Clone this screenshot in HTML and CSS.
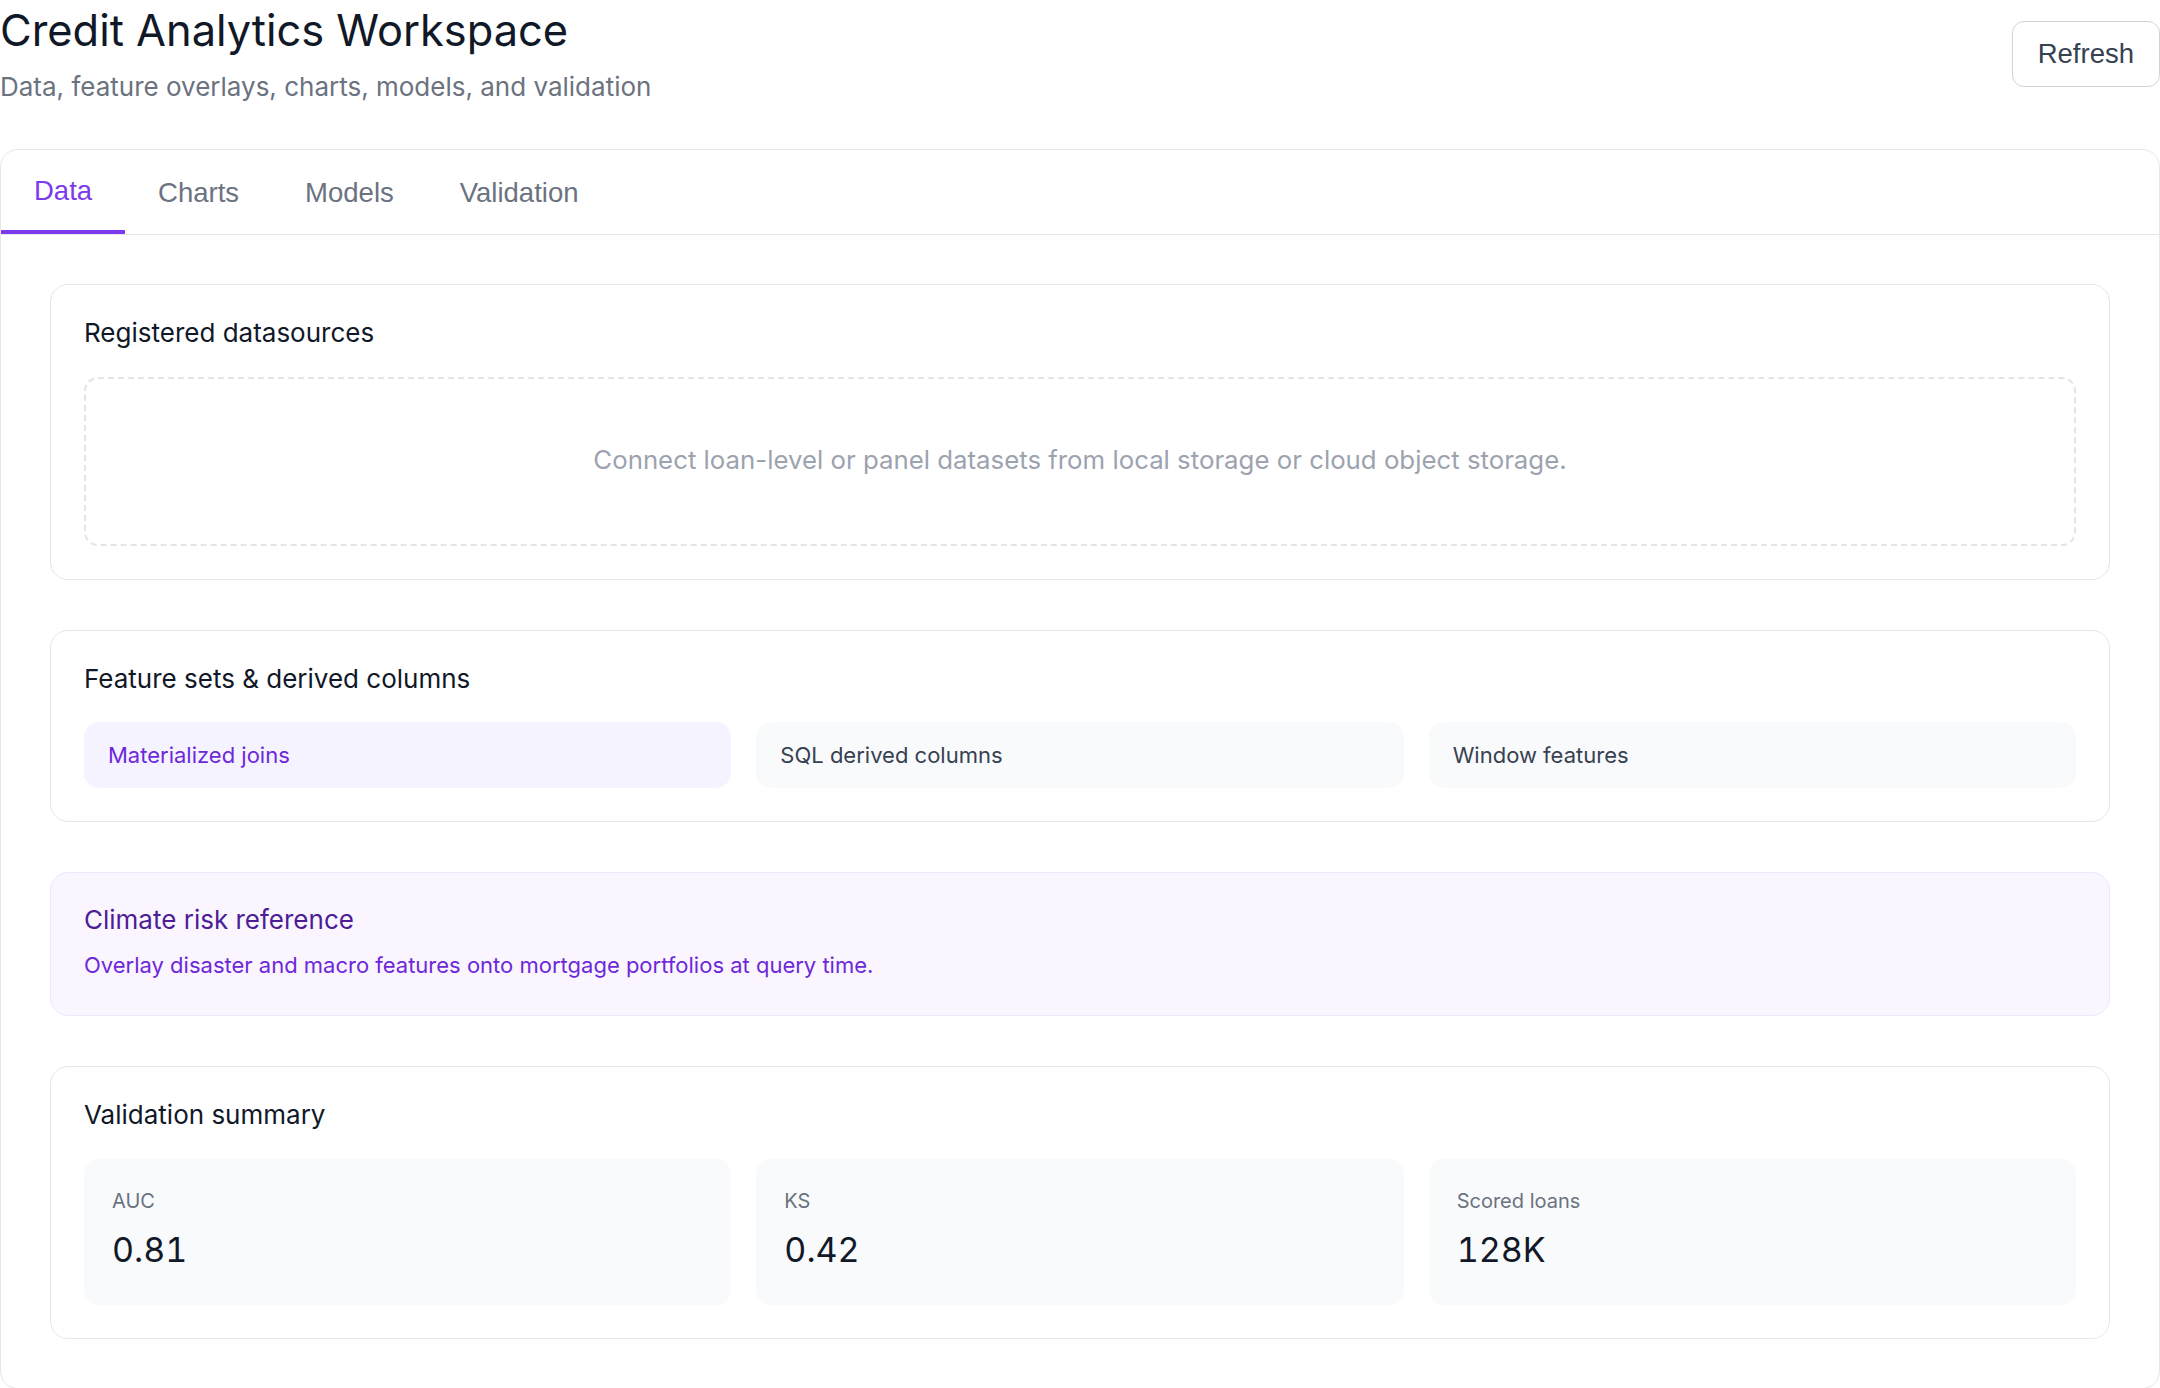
FILE: index.html
```html
<!DOCTYPE html>
<html lang="en">
<head>
  <meta charset="UTF-8">
  <title>Credit Analytics Workspace</title>
  <link rel="stylesheet" href="styles.css">
</head>
<body>
  <header class="page-head">
    <div>
      <h1>Credit Analytics Workspace</h1>
      <p class="subtitle">Data, feature overlays, charts, models, and validation</p>
    </div>
    <button class="refresh">Refresh</button>
  </header>

  <main class="workspace">
    <nav class="tabs">
      <button class="tab active">Data</button>
      <button class="tab">Charts</button>
      <button class="tab">Models</button>
      <button class="tab">Validation</button>
    </nav>

    <div class="panel">
      <section class="card">
        <h3>Registered datasources</h3>
        <div class="empty">Connect loan-level or panel datasets from local storage or cloud object storage.</div>
      </section>

      <section class="card">
        <h3>Feature sets &amp; derived columns</h3>
        <div class="chips">
          <div class="chip active">Materialized joins</div>
          <div class="chip">SQL derived columns</div>
          <div class="chip">Window features</div>
        </div>
      </section>

      <section class="card note">
        <h3>Climate risk reference</h3>
        <p>Overlay disaster and macro features onto mortgage portfolios at query time.</p>
      </section>

      <section class="card">
        <h3>Validation summary</h3>
        <div class="stats">
          <div class="stat">
            <div class="label">AUC</div>
            <div class="value">0.81</div>
          </div>
          <div class="stat">
            <div class="label">KS</div>
            <div class="value">0.42</div>
          </div>
          <div class="stat">
            <div class="label">Scored loans</div>
            <div class="value">128K</div>
          </div>
        </div>
      </section>
    </div>
  </main>
</body>
</html>
```

FILE: styles.css
```css
body {
  margin: 0;
  font-family: Inter, "Noto Sans", sans-serif;
  color: #111827;
  background: #fff;
}
.page-head {
  display: flex;
  justify-content: space-between;
  align-items: center;
  padding-top: 3px;
  margin-bottom: 44px;
}
h1 {
  margin: 0;
  font-size: 43.4px;
  font-weight: 400;
  line-height: 55px;
}
.subtitle {
  margin: 10px 0 0;
  font-size: 26px;
  line-height: 37px;
  color: #6b7280;
}
.refresh {
  font-family: "Liberation Sans", Arial, sans-serif;
  font-size: 27.5px;
  color: #374151;
  background: #fff;
  border: 1.5px solid #d1d5db;
  border-radius: 12px;
  padding: 0 25px;
  height: 66px;
}
.workspace {
  border: 1.5px solid #e5e7eb;
  border-radius: 18px;
}
.tabs {
  display: flex;
  border-bottom: 1.5px solid #e5e7eb;
}
.tab {
  font-family: "Liberation Sans", Arial, sans-serif;
  font-size: 27.5px;
  color: #6b7280;
  background: none;
  border: 0;
  padding: 25px 33px 23px;
}
.tab.active {
  color: #7c3aed;
  border-bottom: 4px solid #7c3aed;
}
.panel {
  padding: 49px;
  display: flex;
  flex-direction: column;
  gap: 50px;
}
.card {
  border: 1.5px solid #e5e7eb;
  border-radius: 18px;
  padding: 33px;
}
.card h3 {
  margin: 0 0 28.5px;
  font-size: 26px;
  font-weight: 400;
  line-height: 30px;
}
.empty {
  border: 2px dashed #e1e4e8;
  border-radius: 14px;
  height: 169px;
  box-sizing: border-box;
  padding-bottom: 3px;
  display: flex;
  align-items: center;
  justify-content: center;
  font-size: 25.8px;
  color: #9ca3af;
}
.chips, .stats {
  display: grid;
  grid-template-columns: repeat(3, 1fr);
  gap: 25px;
}
.chip {
  background: #f9fafb;
  border-radius: 15px;
  padding: 16px 24px;
  font-size: 22px;
  line-height: 34px;
  color: #374151;
}
.chip.active {
  background: #f5f3ff;
  color: #6d28d9;
}
.note {
  background: #faf5ff;
  border-color: #ede9fe;
  padding-top: 32px;
  padding-bottom: 33px;
}
.note h3 {
  color: #4c1d95;
  margin-bottom: 14px;
}
.note p {
  margin: 0;
  font-size: 22px;
  line-height: 33px;
  color: #6d28d9;
}
.stat {
  background: #f9fafb;
  border-radius: 15px;
  padding: 28px 28px 33px;
}
.label {
  font-size: 20px;
  line-height: 28px;
  color: #6b7280;
}
.value {
  margin-top: 13px;
  font-size: 34px;
  line-height: 44px;
  font-variant-numeric: tabular-nums;
  color: #111827;
}
```
